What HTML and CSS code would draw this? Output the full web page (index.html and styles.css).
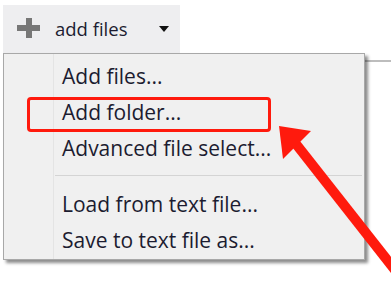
FILE: index.html
```html
<!DOCTYPE html>
<html>
<head>
<meta charset="utf-8">
<link rel="stylesheet" href="styles.css">
</head>
<body>
<div class="page">
  <div class="toolbar">
    <span class="plus"></span>
    <span class="btn-label">add files</span>
    <span class="caret"></span>
  </div>
  <div class="edge-line"></div>
  <div class="menu">
    <div class="item">Add files...</div>
    <div class="item">Add folder...</div>
    <div class="item">Advanced file select...</div>
    <div class="sep"></div>
    <div class="item">Load from text file...</div>
    <div class="item">Save to text file as...</div>
  </div>
  <div class="highlight"></div>
  <svg class="arrow" width="391" height="281" viewBox="0 0 391 281">
    <line x1="296" y1="144" x2="410" y2="289" stroke="#ff1a0d" stroke-width="10"/>
    <polygon points="279,126 283,159 311,131" fill="#ff1a0d"/>
  </svg>
</div>
</body>
</html>
```

FILE: styles.css
```css
html, body {
  margin: 0;
  padding: 0;
  background: #ffffff;
}
.page {
  position: relative;
  width: 391px;
  height: 281px;
  overflow: hidden;
  font-family: "Open Sans", "Noto Sans", sans-serif;
}
.toolbar {
  margin: 5px 0 0 3px;
  width: 177px;
  height: 48px;
  background: #eeeef0;
  display: flex;
  align-items: center;
  box-sizing: border-box;
}
.plus {
  position: relative;
  width: 23px;
  height: 20px;
  margin-left: 14px;
  margin-top: -2px;
}
.plus::before, .plus::after {
  content: "";
  position: absolute;
  background: #777777;
}
.plus::before {
  left: 0;
  right: 0;
  top: 7px;
  height: 6px;
}
.plus::after {
  top: 0;
  bottom: 0;
  left: 8.5px;
  width: 6px;
}
.btn-label {
  margin-left: 15px;
  font-size: 18.5px;
  color: #1c1c30;
  margin-top: -2px;
}
.caret {
  margin-left: 31px;
  margin-top: -1px;
  width: 0;
  height: 0;
  border-left: 5.5px solid transparent;
  border-right: 5.5px solid transparent;
  border-top: 6px solid #111;
}
.edge-line {
  position: absolute;
  left: 360px;
  top: 60px;
  width: 40px;
  height: 2px;
  background: #bdbdbd;
}
.menu {
  position: absolute;
  left: 3px;
  top: 53px;
  width: 362px;
  height: 207px;
  box-sizing: border-box;
  background: #f0f0f0;
  border: 1px solid #a8a8a8;
  box-shadow: 3px 3px 3px rgba(0,0,0,0.45);
  padding-top: 4px;
}
.menu::before {
  content: "";
  position: absolute;
  left: 49px;
  top: 0;
  bottom: 0;
  width: 1px;
  background: #e4e4e4;
}
.item {
  height: 36px;
  line-height: 36px;
  padding-left: 58px;
  font-size: 21px;
  color: #1c1c30;
  white-space: nowrap;
}
.sep {
  height: 20px;
  position: relative;
}
.sep::after {
  content: "";
  position: absolute;
  left: 51px;
  right: 2px;
  top: 9px;
  height: 1px;
  background: #d4d4d4;
}
.highlight {
  position: absolute;
  left: 27px;
  top: 97px;
  width: 244px;
  height: 35px;
  box-sizing: border-box;
  border: 3px solid #ff1a0d;
  border-radius: 4px;
}
.arrow {
  position: absolute;
  left: 0;
  top: 0;
}
```
